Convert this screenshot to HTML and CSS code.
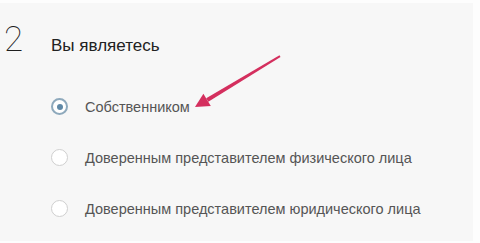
FILE: index.html
```html
<!DOCTYPE html>
<html lang="ru">
<head>
<meta charset="utf-8">
<link rel="stylesheet" href="styles.css">
</head>
<body>
<div class="card">
  <div class="step">
    <span class="step-num">2</span>
    <span class="step-title">Вы являетесь</span>
  </div>
  <div class="options">
    <label class="option">
      <span class="radio radio-checked"><span class="radio-dot"></span></span>
      <span class="option-text">Собственником</span>
    </label>
    <label class="option">
      <span class="radio"></span>
      <span class="option-text">Доверенным представителем физического лица</span>
    </label>
    <label class="option">
      <span class="radio"></span>
      <span class="option-text">Доверенным представителем юридического лица</span>
    </label>
  </div>
  <svg class="arrow" width="480" height="243" viewBox="0 0 480 243">
    <polygon points="279.5,55.3 280.5,57 208.3,101.8 206.2,98.3" fill="#d42f5e"/>
    <polygon points="195,107 203.4,93.7 210.8,106" fill="#d42f5e"/>
  </svg>
</div>
</body>
</html>
```
FILE: styles.css
```css
html, body {
  margin: 0;
  padding: 0;
  background: #fdfdfd;
}
.card {
  position: relative;
  box-sizing: border-box;
  margin: 3px 7px 0 0;
  height: 238px;
  background: #f7f7f7;
  padding: 16px 0 0 0;
}
.step {
  display: flex;
  align-items: baseline;
  height: 44px;
}
.step-num {
  width: 51px;
  padding-left: 4px;
  box-sizing: border-box;
  font-family: Roboto, "Liberation Sans", sans-serif;
  font-weight: 100;
  font-size: 35px;
  line-height: 42px;
  color: #1e1e1e;
}
.step-title {
  font-family: "Liberation Sans", Arial, sans-serif;
  font-size: 17px;
  color: #222;
}
.options {
  display: flex;
  flex-direction: column;
  padding-top: 18px;
}
.option {
  display: flex;
  align-items: center;
  height: 51px;
  padding-left: 51px;
  gap: 17px;
}
.radio {
  box-sizing: border-box;
  width: 17px;
  height: 17px;
  border-radius: 50%;
  border: 1px solid #cfcfcf;
  background: #fff;
  display: flex;
  align-items: center;
  justify-content: center;
  flex: none;
}
.radio-checked {
  border: 2px solid #8ea9bc;
}
.radio-dot {
  width: 6px;
  height: 6px;
  border-radius: 50%;
  background: #5f88a6;
}
.option-text {
  font-family: "Liberation Sans", Arial, sans-serif;
  font-size: 14.5px;
  color: #555;
}
.arrow {
  position: absolute;
  left: 0;
  top: -3px;
  pointer-events: none;
}
```
